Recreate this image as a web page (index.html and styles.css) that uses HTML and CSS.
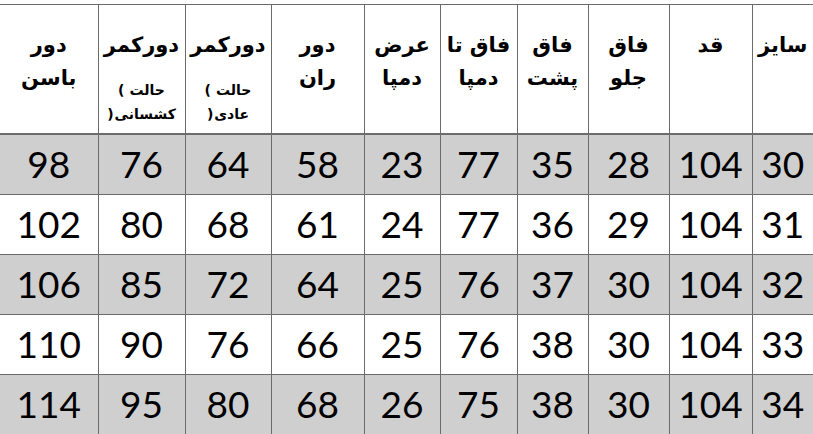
FILE: index.html
```html
<!DOCTYPE html>
<html lang="fa">
<head>
<meta charset="utf-8">
<link rel="stylesheet" href="styles.css">
</head>
<body>
<div class="wrap">
<table class="sizes" dir="rtl">
  <colgroup>
    <col class="c1"><col class="c2"><col class="c3"><col class="c4"><col class="c5">
    <col class="c6"><col class="c7"><col class="c8"><col class="c9"><col class="c10">
  </colgroup>
  <thead>
    <tr>
      <th class="edge-r">سایز</th>
      <th>قد</th>
      <th>فاق<br>جلو</th>
      <th>فاق<br>پشت</th>
      <th>فاق تا<br>دمپا</th>
      <th>عرض<br>دمپا</th>
      <th>دور<br>ران</th>
      <th>دورکمر
        <div class="note">
          <div class="pline"><span>(</span><span>حالت</span></div>
          <div class="pline tight"><span>)</span><span>عادی</span></div>
        </div>
      </th>
      <th>دورکمر
        <div class="note">
          <div class="pline"><span>(</span><span>حالت</span></div>
          <div class="pline tight"><span>)</span><span>کشسانی</span></div>
        </div>
      </th>
      <th class="edge-l">دور<br>باسن</th>
    </tr>
  </thead>
  <tbody>
    <tr class="shade"><td class="edge-r">30</td><td>104</td><td>28</td><td>35</td><td>77</td><td>23</td><td>58</td><td>64</td><td>76</td><td class="edge-l">98</td></tr>
    <tr><td class="edge-r">31</td><td>104</td><td>29</td><td>36</td><td>77</td><td>24</td><td>61</td><td>68</td><td>80</td><td class="edge-l">102</td></tr>
    <tr class="shade"><td class="edge-r">32</td><td>104</td><td>30</td><td>37</td><td>76</td><td>25</td><td>64</td><td>72</td><td>85</td><td class="edge-l">106</td></tr>
    <tr><td class="edge-r">33</td><td>104</td><td>30</td><td>38</td><td>76</td><td>25</td><td>66</td><td>76</td><td>90</td><td class="edge-l">110</td></tr>
    <tr class="shade"><td class="edge-r">34</td><td>104</td><td>30</td><td>38</td><td>75</td><td>26</td><td>68</td><td>80</td><td>95</td><td class="edge-l">114</td></tr>
  </tbody>
</table>
</div>
</body>
</html>
```
FILE: styles.css
```css
html, body {
  margin: 0;
  padding: 0;
  background: #ffffff;
  overflow: hidden;
}

.wrap {
  padding-top: 4px;
  width: 813px;
}

.sizes {
  width: 813px;
  table-layout: fixed;
  border-collapse: collapse;
  border-top: 1px solid #6b6b6b;
}

.c1 { width: 61px; }
.c2 { width: 83px; }
.c3 { width: 81px; }
.c4 { width: 71px; }
.c5 { width: 77px; }
.c6 { width: 76px; }
.c7 { width: 93px; }
.c8 { width: 86px; }
.c9 { width: 87px; }
.c10 { width: 98px; }

.sizes th,
.sizes td {
  border: 1px solid #6b6b6b;
  padding: 0;
  color: #000;
}

.sizes .edge-r { border-right: none; }
.sizes .edge-l { border-left: none; }

.sizes th {
  height: 129px;
  vertical-align: top;
  text-align: center;
  font-family: "DejaVu Sans", "Noto Sans", sans-serif;
  font-weight: bold;
  font-size: 21px;
  line-height: 33px;
  padding-top: 24px;
  box-sizing: border-box;
  border-bottom: 2px solid #6b6b6b;
}

.note {
  margin-top: 16px;
  font-size: 14px;
  line-height: 24px;
}

.pline {
  display: flex;
  direction: ltr;
  justify-content: center;
  gap: 5px;
}

.pline.tight {
  gap: 1px;
}

.sizes td {
  height: 59px;
  text-align: center;
  vertical-align: middle;
  font-family: "Lato", "Open Sans", sans-serif;
  font-size: 37px;
  line-height: 40px;
  padding-top: 0;
}

.shade td {
  background: #cfcfcf;
}
```
